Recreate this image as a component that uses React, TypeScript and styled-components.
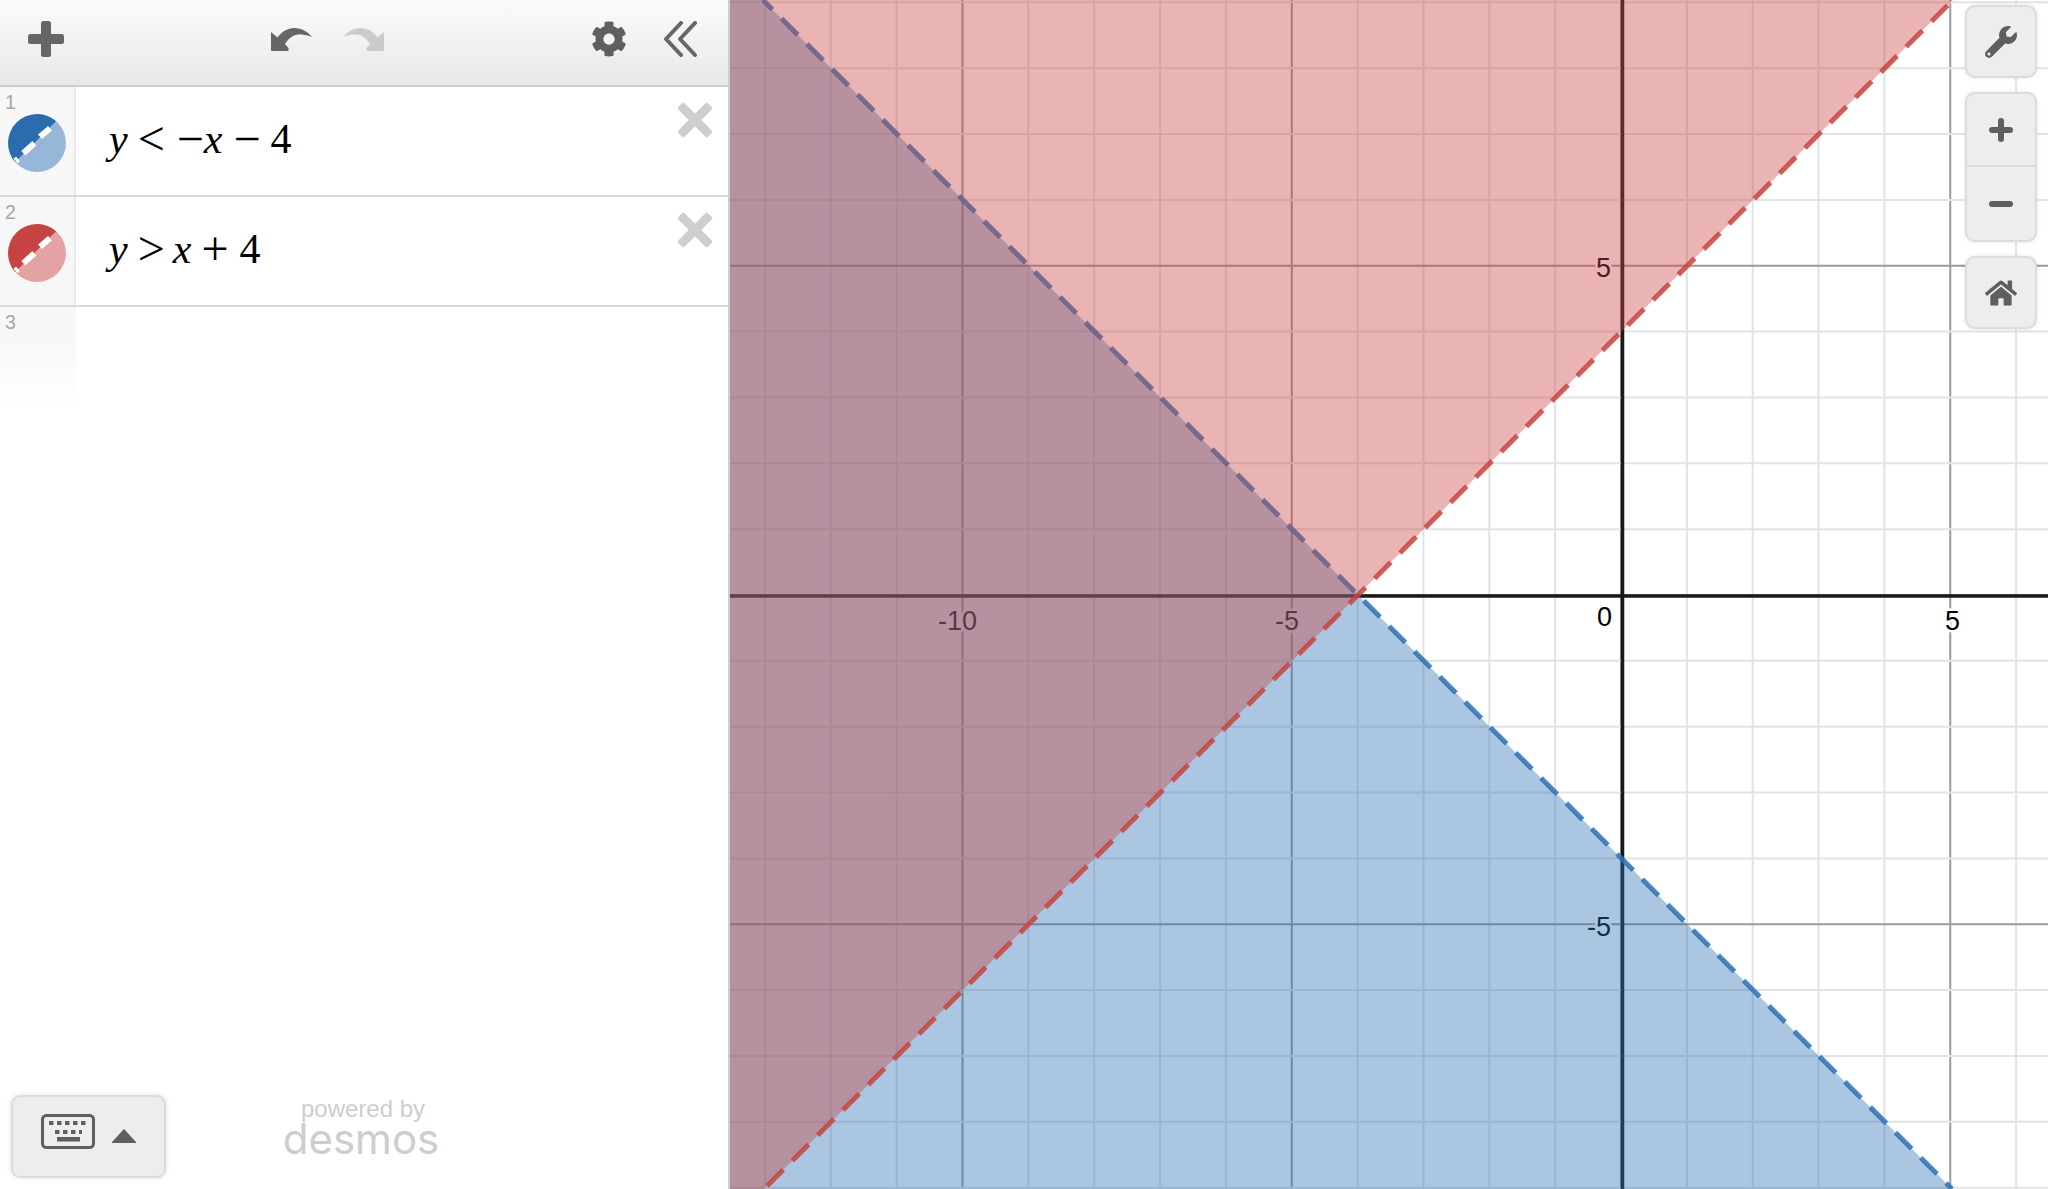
import styled, { createGlobalStyle } from "styled-components";
import { FaCog, FaHome, FaWrench } from "react-icons/fa";

const GlobalStyle = createGlobalStyle`
  html, body {
    margin: 0;
    padding: 0;
    overflow: hidden;
    background: #fff;
  }
`;

const Wrapper = styled.div`
  width: 2048px;
  height: 1189px;
  display: flex;
  font-family: "Liberation Sans", Arial, sans-serif;
`;

const Panel = styled.aside`
  width: 730px;
  height: 100%;
  box-sizing: border-box;
  border-right: 2px solid #cfcfcf;
  display: flex;
  flex-direction: column;
  flex-shrink: 0;
`;

const Toolbar = styled.header`
  height: 87px;
  box-sizing: border-box;
  padding: 21px 31px 0 28px;
  border-bottom: 2px solid #cdcdcd;
  background: linear-gradient(#fbfbfb, #e8e8e8);
  display: flex;
  justify-content: space-between;
  align-items: flex-start;
`;

const ToolGroup = styled.div<{ $gap?: number }>`
  display: flex;
  align-items: center;
  gap: ${(p) => p.$gap ?? 0}px;
`;

const UndoSlot = styled.div`
  height: 36px;
  display: flex;
  align-items: center;
`;

const Row = styled.div`
  height: 110px;
  box-sizing: border-box;
  border-bottom: 2px solid #d9d9d9;
  display: flex;
  align-items: flex-start;
`;

const Gutter = styled.div<{ $fade?: boolean }>`
  width: 76px;
  height: 100%;
  box-sizing: border-box;
  padding-top: 5px;
  flex-shrink: 0;
  border-right: 2px solid ${(p) => (p.$fade ? "transparent" : "#e9e9e9")};
  background: ${(p) =>
    p.$fade ? "linear-gradient(#f7f7f7 20%, #fff 95%)" : "#f7f7f7"};
`;

const RowNumber = styled.div`
  padding-left: 5px;
  height: 20px;
  line-height: 20px;
  font-size: 19.5px;
  color: #a6a6a6;
`;

const Swatch = styled.svg`
  display: block;
  width: 58px;
  height: 58px;
  margin: 2px 0 0 8px;
`;

const Expression = styled.div`
  margin: 26px 0 0 33px;
  display: flex;
  align-items: baseline;
  height: 48px;
  line-height: 48px;
  font-family: "Liberation Serif", "Times New Roman", serif;
  font-size: 42px;
  color: #000;
`;

const Var = styled.span`
  font-style: italic;
`;

const Op = styled.span<{ $left: number; $right: number }>`
  font-size: 48px;
  margin: 0 ${(p) => p.$right}px 0 ${(p) => p.$left}px;
  transform: translateY(2px);
`;

const Delete = styled.svg`
  width: 36px;
  height: 36px;
  margin: 15px 15px 0 auto;
  flex-shrink: 0;
`;

const EmptyRow = styled.div`
  height: 110px;
`;

const Footer = styled.footer`
  margin-top: auto;
  padding: 0 0 11px 11px;
  display: flex;
  align-items: flex-start;
`;

const KeypadButton = styled.div`
  width: 155px;
  height: 83px;
  box-sizing: border-box;
  border: 2px solid #dcdcdc;
  border-radius: 9px;
  background: #ededed;
  box-shadow: 0 0 5px rgba(0, 0, 0, 0.12);
  padding: 17px 0 0 28px;
  display: flex;
  align-items: flex-start;
  gap: 17px;
`;

const Brand = styled.div`
  margin: 1px 0 0 117px;
  width: 160px;
  display: flex;
  flex-direction: column;
  align-items: center;
  color: #cdcdcd;
`;

const Powered = styled.div`
  font-size: 24px;
  line-height: 26px;
`;

const Wordmark = styled.div`
  font-family: Inter, sans-serif;
  font-size: 42px;
  font-weight: 400;
  line-height: 32px;
  margin: 1px 4px 0 0;
`;

const Graph = styled.main`
  position: relative;
  flex: 1;
  height: 100%;
  overflow: hidden;
  background: #fff;
`;

const Canvas = styled.svg`
  display: block;
  width: 100%;
  height: 100%;
`;

const Tick = styled.text`
  font-family: "Liberation Sans", Arial, sans-serif;
  font-size: 27px;
  fill: #000;
  stroke: #fff;
  stroke-width: 5px;
  paint-order: stroke;
  stroke-linejoin: round;
`;

const GraphControls = styled.div`
  position: absolute;
  top: 5px;
  right: 11px;
  display: flex;
  flex-direction: column;
  gap: 14px;
`;

const ControlCard = styled.div`
  width: 72px;
  box-sizing: border-box;
  border: 2px solid #dcdcdc;
  border-radius: 10px;
  background: #ededed;
  box-shadow: 0 0 4px rgba(0, 0, 0, 0.1);
  color: #5f5f5f;
`;

const ControlCell = styled.div<{ $divider?: boolean; $height: number }>`
  height: ${(p) => p.$height}px;
  box-sizing: border-box;
  display: flex;
  align-items: center;
  justify-content: center;
  border-bottom: ${(p) => (p.$divider ? "2px solid #dcdcdc" : "none")};
`;

const X0 = 1621;
const Y0 = 595;
const UNIT = 65.85;
const TOP_X = 1953;

const xLines = Array.from({ length: 21 }, (_, i) => i - 13);
const yLines = Array.from({ length: 19 }, (_, i) => i - 9);

function Swatches({ dark, light }: { dark: string; light: string }) {
  return (
    <Swatch viewBox="0 0 58 58">
      <circle cx="29" cy="29" r="29" fill={light} />
      <path d="M7.15 48.05 L48.05 7.15 A29 29 0 0 0 7.15 48.05 Z" fill={dark} />
      <path d="M15.3 39.3 L26.3 29.3 M32 22.7 L42 14.3 M7.5 47 L10 44.8" stroke="#fff" strokeWidth="6" />
    </Swatch>
  );
}

function DeleteIcon() {
  return (
    <Delete viewBox="0 0 36 36">
      <g fill="#cecece" transform="translate(18 18)">
        <rect x="-21" y="-4.5" width="42" height="9" rx="2.5" transform="rotate(45)" />
        <rect x="-21" y="-4.5" width="42" height="9" rx="2.5" transform="rotate(-45)" />
      </g>
    </Delete>
  );
}

function Undo({ flip, color }: { flip?: boolean; color: string }) {
  return (
    <svg width="41" height="23" viewBox="0 0 41 23" style={{ transform: flip ? "scaleX(-1)" : undefined }}>
      <path
        d="M0 4 L6.5 9.5 C11 3.5 17 0 23 0 C31 0 37 4 41 9 C36 7 32 6.5 28 6.5 C22 6.5 17 11 14 16 L17.5 20 L17.5 23 L1 23 Q0 23 0 22 Z"
        fill={color}
      />
    </svg>
  );
}

function App() {
  return (
    <Wrapper>
      <GlobalStyle />
      <Panel>
        <Toolbar>
          <svg width="36" height="36" viewBox="0 0 36 36">
            <rect x="13" y="0" width="10" height="36" rx="2.5" fill="#666" />
            <rect x="0" y="13" width="36" height="10" rx="2.5" fill="#666" />
          </svg>
          <ToolGroup $gap={31}>
            <UndoSlot>
              <Undo color="#666" />
            </UndoSlot>
            <UndoSlot>
              <Undo flip color="#cbcbcb" />
            </UndoSlot>
          </ToolGroup>
          <ToolGroup $gap={37}>
            <FaCog size={36} color="#5f5f5f" />
            <svg width="33" height="36" viewBox="0 0 33 36">
              <path d="M17 2 L2 18 L17 34 M31 2 L16 18 L31 34" fill="none" stroke="#666" strokeWidth="4" strokeLinecap="round" strokeLinejoin="round" />
            </svg>
          </ToolGroup>
        </Toolbar>

        <Row>
          <Gutter>
            <RowNumber>1</RowNumber>
            <Swatches dark="#2b6cae" light="#97b7d9" />
          </Gutter>
          <Expression>
            <Var>y</Var>
            <Op $left={10} $right={12}>&lt;</Op>
            <Op $left={0} $right={0}>−</Op>
            <Var>x</Var>
            <Op $left={11} $right={10}>−</Op>
            <span>4</span>
          </Expression>
          <DeleteIcon />
        </Row>
        <Row>
          <Gutter>
            <RowNumber>2</RowNumber>
            <Swatches dark="#c54341" light="#e3a3a2" />
          </Gutter>
          <Expression>
            <Var>y</Var>
            <Op $left={10} $right={8}>&gt;</Op>
            <Var>x</Var>
            <Op $left={10} $right={11}>+</Op>
            <span>4</span>
          </Expression>
          <DeleteIcon />
        </Row>
        <EmptyRow>
          <Gutter $fade>
            <RowNumber>3</RowNumber>
          </Gutter>
        </EmptyRow>

        <Footer>
          <KeypadButton>
            <svg width="54" height="36" viewBox="0 0 54 36">
              <rect x="1.5" y="1.5" width="51" height="32" rx="4" fill="none" stroke="#5f5f5f" strokeWidth="3" />
              <path d="M8 9 H46 M14 18 H41" stroke="#5f5f5f" strokeWidth="4" strokeDasharray="4.5 3.5" />
              <rect x="16" y="23" width="23" height="4.5" fill="#5f5f5f" />
            </svg>
            <svg width="24" height="15" viewBox="0 0 24 15" style={{ marginTop: 15 }}>
              <path d="M12 0 L24 13 V14 H0 V13 Z" fill="#5f5f5f" />
            </svg>
          </KeypadButton>
          <Brand>
            <Powered>powered by</Powered>
            <Wordmark>desmos</Wordmark>
          </Brand>
        </Footer>
      </Panel>

      <Graph>
        <Canvas viewBox="730 0 1318 1189">
          {xLines.map((k) => (
            <line
              key={`x${k}`}
              x1={X0 + k * UNIT}
              x2={X0 + k * UNIT}
              y1={0}
              y2={1189}
              stroke={k % 5 === 0 ? "#9a9a9a" : "#e3e3e3"}
              strokeWidth={2}
            />
          ))}
          {yLines.map((k) => (
            <line
              key={`y${k}`}
              y1={Y0 - k * UNIT}
              y2={Y0 - k * UNIT}
              x1={730}
              x2={2048}
              stroke={k % 5 === 0 ? "#9a9a9a" : "#e3e3e3"}
              strokeWidth={2}
            />
          ))}
          <line x1={1622.5} x2={1622.5} y1={0} y2={1189} stroke="#1a1a1a" strokeWidth={3.5} />
          <line x1={730} x2={2048} y1={596} y2={596} stroke="#1a1a1a" strokeWidth={3.5} />

          <Tick x={938} y={630}>-10</Tick>
          <Tick x={1275} y={630}>-5</Tick>
          <Tick x={1597} y={626}>0</Tick>
          <Tick x={1945} y={630}>5</Tick>
          <Tick x={1596} y={277}>5</Tick>
          <Tick x={1587} y={936}>-5</Tick>

          <polygon points="730,0 763,0 1952,1189 730,1189" fill="#2d70b3" fillOpacity={0.4} />
          <line
            x1={763}
            y1={0}
            x2={1952}
            y2={1189}
            stroke="#2d70b3"
            strokeOpacity={0.85}
            strokeWidth={5}
            strokeDasharray="23 12.8"
            strokeDashoffset={9.5}
          />
          <polygon points={`730,0 ${TOP_X},0 764,1189 730,1189`} fill="#c74440" fillOpacity={0.4} />
          <line
            x1={764}
            y1={1189}
            x2={TOP_X}
            y2={0}
            stroke="#c74440"
            strokeOpacity={0.85}
            strokeWidth={5}
            strokeDasharray="23 12.8"
            strokeDashoffset={31.5}
          />
        </Canvas>

        <GraphControls>
          <ControlCard>
            <ControlCell $height={69}>
              <FaWrench size={32} />
            </ControlCell>
          </ControlCard>
          <ControlCard>
            <ControlCell $height={73} $divider>
              <svg width="24" height="24" viewBox="0 0 24 24">
                <path d="M12 3 V21 M3 12 H21" stroke="#5f5f5f" strokeWidth="6" strokeLinecap="round" />
              </svg>
            </ControlCell>
            <ControlCell $height={73}>
              <svg width="24" height="6" viewBox="0 0 24 6">
                <path d="M3 3 H21" stroke="#5f5f5f" strokeWidth="6" strokeLinecap="round" />
              </svg>
            </ControlCell>
          </ControlCard>
          <ControlCard>
            <ControlCell $height={69}>
              <FaHome size={32} />
            </ControlCell>
          </ControlCard>
        </GraphControls>
      </Graph>
    </Wrapper>
  );
}

export default App;
